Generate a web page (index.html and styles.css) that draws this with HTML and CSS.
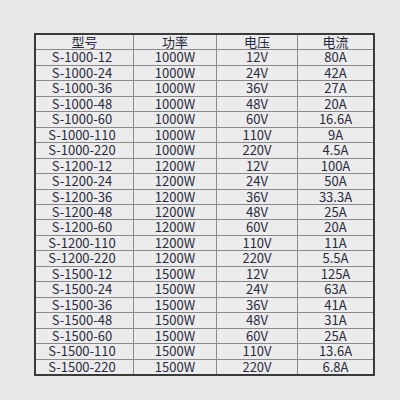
FILE: index.html
```html
<!DOCTYPE html>
<html>
<head>
<meta charset="utf-8">
<link rel="stylesheet" href="styles.css">
</head>
<body>
<div class="page">
<table class="spec">
<thead>
<tr><th>型号</th><th>功率</th><th>电压</th><th>电流</th></tr>
</thead>
<tbody>
<tr><td>S-1000-12</td><td>1000W</td><td>12V</td><td>80A</td></tr>
<tr><td>S-1000-24</td><td>1000W</td><td>24V</td><td>42A</td></tr>
<tr><td>S-1000-36</td><td>1000W</td><td>36V</td><td>27A</td></tr>
<tr><td>S-1000-48</td><td>1000W</td><td>48V</td><td>20A</td></tr>
<tr><td>S-1000-60</td><td>1000W</td><td>60V</td><td>16.6A</td></tr>
<tr><td>S-1000-110</td><td>1000W</td><td>110V</td><td>9A</td></tr>
<tr><td>S-1000-220</td><td>1000W</td><td>220V</td><td>4.5A</td></tr>
<tr><td>S-1200-12</td><td>1200W</td><td>12V</td><td>100A</td></tr>
<tr><td>S-1200-24</td><td>1200W</td><td>24V</td><td>50A</td></tr>
<tr><td>S-1200-36</td><td>1200W</td><td>36V</td><td>33.3A</td></tr>
<tr><td>S-1200-48</td><td>1200W</td><td>48V</td><td>25A</td></tr>
<tr><td>S-1200-60</td><td>1200W</td><td>60V</td><td>20A</td></tr>
<tr><td>S-1200-110</td><td>1200W</td><td>110V</td><td>11A</td></tr>
<tr><td>S-1200-220</td><td>1200W</td><td>220V</td><td>5.5A</td></tr>
<tr><td>S-1500-12</td><td>1500W</td><td>12V</td><td>125A</td></tr>
<tr><td>S-1500-24</td><td>1500W</td><td>24V</td><td>63A</td></tr>
<tr><td>S-1500-36</td><td>1500W</td><td>36V</td><td>41A</td></tr>
<tr><td>S-1500-48</td><td>1500W</td><td>48V</td><td>31A</td></tr>
<tr><td>S-1500-60</td><td>1500W</td><td>60V</td><td>25A</td></tr>
<tr><td>S-1500-110</td><td>1500W</td><td>110V</td><td>13.6A</td></tr>
<tr><td>S-1500-220</td><td>1500W</td><td>220V</td><td>6.8A</td></tr>
</tbody>
</table>
</div>
</body>
</html>
```
FILE: styles.css
```css
html, body {
  margin: 0;
  padding: 0;
  background: #e8e8e8;
}
.page {
  width: 400px;
  height: 400px;
  padding: 33px 0 0 34px;
  box-sizing: border-box;
}
.spec {
  border-collapse: collapse;
  table-layout: fixed;
  width: 336px;
  background: #ececec;
  border: 2px solid #3a3a3a;
  font-family: "Noto Sans CJK SC", "Noto Sans", sans-serif;
  font-size: 13px;
  color: #292b40;
}
.spec th:nth-child(1) { width: 97px; }
.spec th:nth-child(2) { width: 82px; }
.spec th:nth-child(3) { width: 80px; }
.spec th:nth-child(4) { width: 75px; }
.spec th,
.spec td {
  border: 1px solid #8a8a8a;
  padding: 0;
  height: 14.45px;
  line-height: 14.45px;
  text-align: center;
  font-weight: normal;
  white-space: nowrap;
}
.spec td:first-child {
  padding-right: 5px;
}
```
